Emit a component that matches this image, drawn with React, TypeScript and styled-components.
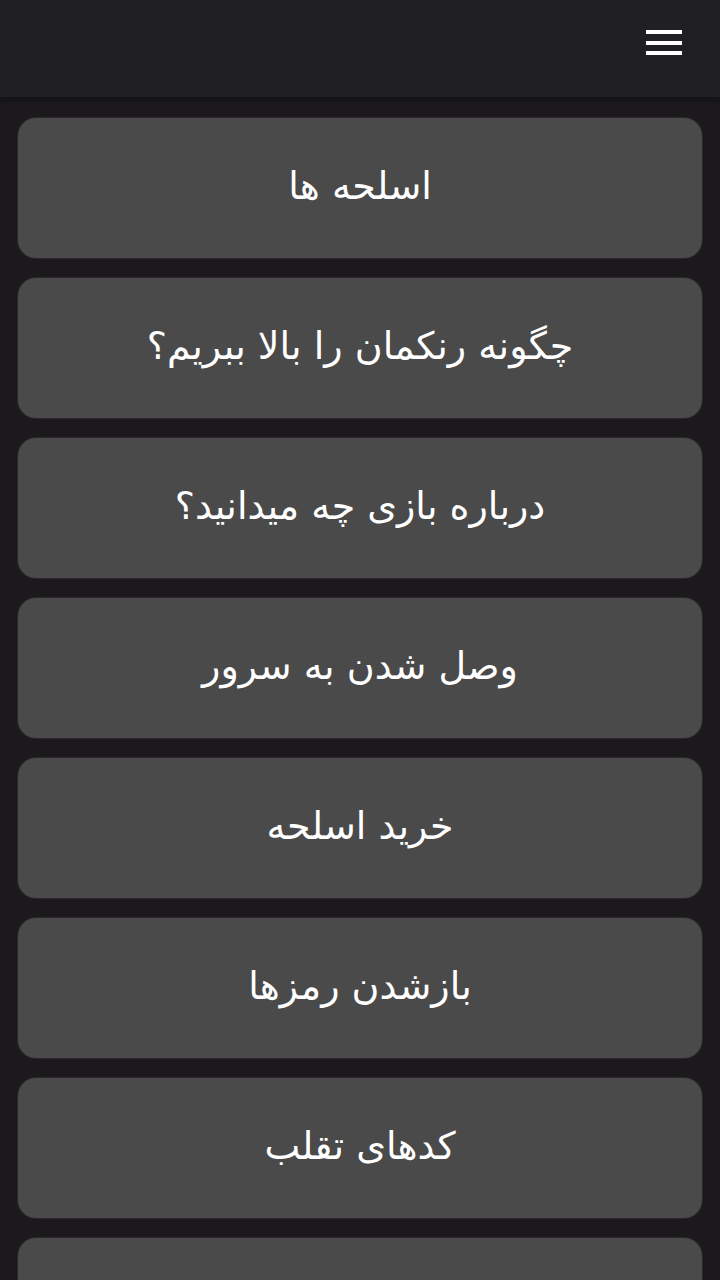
import React from 'react'
import styled, { createGlobalStyle } from 'styled-components'

const GlobalStyle = createGlobalStyle`
  html, body {
    margin: 0;
    padding: 0;
    background: #1b191b;
    font-family: "DejaVu Sans", "Noto Sans", sans-serif;
  }
`

const items = [
  'اسلحه ها',
  'چگونه رنکمان را بالا ببریم؟',
  'درباره بازی چه میدانید؟',
  'وصل شدن به سرور',
  'خرید اسلحه',
  'بازشدن رمزها',
  'کدهای تقلب',
  '',
]

export default function App() {
  return (
    <Page>
      <GlobalStyle />
      <Header>
        <MenuButton aria-label="menu">
          <Bar />
          <Bar />
          <Bar />
        </MenuButton>
      </Header>
      <List>
        {items.map((title, i) => (
          <Card key={i}>{title}</Card>
        ))}
      </List>
    </Page>
  )
}

const Page = styled.div`
  height: 1280px;
  overflow: hidden;
  background: #1b191b;
`

const Header = styled.header`
  height: 97px;
  background: #201f24;
  display: flex;
  justify-content: flex-end;
  align-items: flex-start;
  padding: 30px 38px 0 0;
  box-sizing: border-box;
  box-shadow: 0 3px 6px rgba(0, 0, 0, 0.25);
`

const MenuButton = styled.button`
  background: none;
  border: none;
  padding: 0;
  width: 36px;
  display: flex;
  flex-direction: column;
  gap: 6.5px;
  cursor: pointer;
`

const Bar = styled.span`
  display: block;
  width: 36px;
  height: 4px;
  background: #ffffff;
`

const List = styled.main`
  display: flex;
  flex-direction: column;
  gap: 20px;
  padding: 21px 18px 0;
`

const Card = styled.div`
  direction: rtl;
  height: 140px;
  border-radius: 18px;
  background: #4a4a4a;
  box-shadow: 0 0 0 1px #2a282a;
  display: flex;
  align-items: center;
  justify-content: center;
  color: #ffffff;
  font-size: 38px;
  padding-bottom: 4px;
  box-sizing: border-box;
  flex-shrink: 0;
`
